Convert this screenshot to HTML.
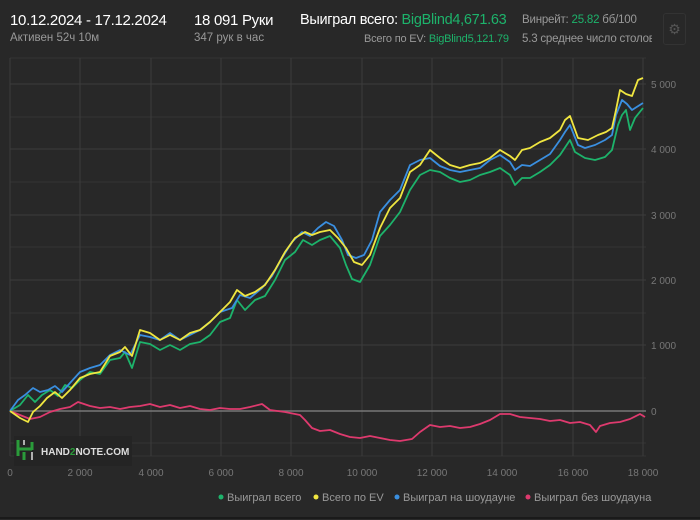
<html><head><style>
body{margin:0;width:700px;height:520px;background:#2a2a2a;font-family:"Liberation Sans",sans-serif;overflow:hidden;position:relative}
.t{position:absolute;white-space:nowrap}
</style></head><body>
<div style="position:absolute;left:0;top:0;width:700px;height:517px;background:#282828;border-bottom:2px solid #1a1a1a"></div>
<div class="t" style="left:10px;top:12px;font-size:15px;color:#fff;letter-spacing:-0.3px">10.12.2024 - 17.12.2024</div>
<div class="t" style="left:10px;top:32px;font-size:11.5px;color:#999">Активен 52ч 10м</div>
<div class="t" style="left:194px;top:12px;font-size:15px;color:#fff;letter-spacing:-0.3px">18 091 Руки</div>
<div class="t" style="left:194px;top:32px;font-size:11.5px;color:#999">347 рук в час</div>
<div class="t" style="left:300px;top:12px;font-size:14.5px;color:#fff;letter-spacing:-0.3px">Выиграл всего: <span style="color:#1db36b">BigBlind4,671.63</span></div>
<div class="t" style="left:364px;top:33px;font-size:11px;color:#999;letter-spacing:-0.2px">Всего по EV: <span style="color:#1db36b">BigBlind5,121.79</span></div>
<div class="t" style="left:522px;top:14px;font-size:11.5px;color:#999;letter-spacing:-0.2px">Винрейт: <span style="color:#1db36b">25.82</span> бб/100</div>
<div class="t" style="left:522px;top:33px;font-size:11.5px;color:#999;width:130px;overflow:hidden;letter-spacing:-0.2px">5.3 среднее число столов</div>
<div style="position:absolute;left:663px;top:13px;width:21px;height:30px;border:1px solid #333;border-radius:3px;color:#555;font-size:14px;text-align:center;line-height:30px">⚙</div>
<svg width="700" height="520" style="position:absolute;left:0;top:0">
<g stroke="#333" stroke-width="1">
<line x1="10" y1="58" x2="646" y2="58"/>
<line x1="10" y1="117" x2="646" y2="117"/><line x1="10" y1="182" x2="646" y2="182"/><line x1="10" y1="247" x2="646" y2="247"/><line x1="10" y1="313" x2="646" y2="313"/><line x1="10" y1="378" x2="646" y2="378"/><line x1="10" y1="443" x2="646" y2="443"/>
<line x1="10" y1="456" x2="646" y2="456"/>
</g>
<g stroke="#3c3c3c" stroke-width="1">
<line x1="10" y1="84" x2="646" y2="84"/><line x1="10" y1="149" x2="646" y2="149"/><line x1="10" y1="215" x2="646" y2="215"/><line x1="10" y1="280" x2="646" y2="280"/><line x1="10" y1="345" x2="646" y2="345"/>
<line x1="10" y1="58" x2="10" y2="456"/><line x1="80" y1="58" x2="80" y2="456"/><line x1="151" y1="58" x2="151" y2="456"/><line x1="221" y1="58" x2="221" y2="456"/><line x1="291" y1="58" x2="291" y2="456"/><line x1="362" y1="58" x2="362" y2="456"/><line x1="432" y1="58" x2="432" y2="456"/><line x1="502" y1="58" x2="502" y2="456"/><line x1="573" y1="58" x2="573" y2="456"/><line x1="643" y1="58" x2="643" y2="456"/>
</g>
<line x1="10" y1="411" x2="646" y2="411" stroke="#777" stroke-width="1.5"/>
<g font-size="10" fill="#777">
<text x="651" y="88">5 000</text><text x="651" y="153">4 000</text><text x="651" y="219">3 000</text><text x="651" y="284">2 000</text><text x="651" y="349">1 000</text><text x="651" y="415">0</text>
<g text-anchor="middle"><text x="10" y="476">0</text><text x="80" y="476">2 000</text><text x="151" y="476">4 000</text><text x="221" y="476">6 000</text><text x="291" y="476">8 000</text><text x="362" y="476">10 000</text><text x="432" y="476">12 000</text><text x="502" y="476">14 000</text><text x="573" y="476">16 000</text><text x="643" y="476">18 000</text></g>
</g>
<g fill="none" stroke-width="1.8" stroke-linejoin="round">
<polyline stroke="#de3a6e" points="10,411 20,415 30,419 40,417 50,412 60,409 70,407 78,402 90,406 100,408 110,407 120,409 130,407 140,406 150,404 160,407 170,405 180,408 190,406 200,409 210,410 220,408 230,409 240,409 250,407 262,404 270,410 285,412 300,415 305,420 312,428 320,431 330,430 340,434 350,437 360,438 370,436 380,438 390,440 400,441 412,439 420,432 430,425 440,427 450,426 460,428 470,427 480,424 490,420 500,414 510,414 520,417 530,418 540,419 550,421 560,420 570,423 580,422 590,425 596,432 600,426 610,423 620,422 630,419 640,414 645,417"/>
<polyline stroke="#1db36b" points="10,411 20,405 28,395 35,402 42,395 50,390 58,396 65,385 72,388 80,380 90,372 100,374 110,360 120,358 125,352 132,368 140,342 150,344 160,350 170,345 180,350 190,344 200,342 210,335 220,322 230,318 237,300 245,310 255,300 265,296 275,280 285,260 295,252 303,240 312,245 320,240 330,236 340,248 346,265 352,279 360,282 370,265 380,236 390,225 400,212 410,190 420,175 430,170 440,172 450,178 460,182 470,180 480,175 490,172 500,168 510,175 515,185 522,178 530,178 540,172 550,165 560,155 570,140 575,152 585,158 595,160 605,157 612,150 618,125 622,115 626,110 630,130 635,118 643,108"/>
<polyline stroke="#3a8fe0" points="10,411 18,400 25,395 33,388 40,392 48,390 55,386 62,392 70,383 80,372 90,368 100,365 110,355 120,350 130,355 140,335 150,337 160,340 170,333 180,340 190,335 200,330 210,322 220,312 232,308 240,295 250,298 262,288 272,276 282,258 292,242 302,232 310,236 318,228 326,222 334,226 342,240 348,255 356,258 364,255 372,240 380,212 390,200 400,190 410,165 420,160 430,158 440,166 450,170 460,172 470,170 480,168 490,160 500,155 510,162 515,170 522,165 530,166 540,160 550,154 560,140 565,132 570,125 578,145 585,148 595,145 605,140 612,135 616,115 622,100 627,104 632,110 643,103"/>
<polyline stroke="#f0e640" points="10,411 20,418 28,422 33,412 40,406 47,398 55,392 62,398 70,390 80,378 90,374 100,372 110,356 120,352 125,347 132,356 140,330 150,333 160,340 170,335 180,340 190,333 200,330 210,322 220,312 230,302 237,290 245,296 255,292 265,285 275,270 285,252 295,238 305,232 312,235 320,232 330,230 338,238 346,248 354,262 362,265 370,255 380,228 390,208 400,198 410,172 420,165 430,150 440,158 450,165 460,168 470,165 480,163 490,158 500,150 510,156 515,160 522,150 530,148 540,142 550,138 560,130 565,120 570,116 578,138 588,140 598,135 606,132 612,128 616,110 620,90 626,94 632,96 638,80 643,78"/>
</g>
<rect x="14" y="436" width="118" height="30" fill="#242424" opacity="0.9"/>
<path d="M18 440v16M18 449h14M32 442v8M24 452v8" stroke="#2a9b3a" stroke-width="3" fill="none"/>
<path d="M24 440v5M32 452v8" stroke="#ddd" stroke-width="1.5"/>
<text x="41" y="455" font-size="10" font-weight="bold" fill="#ddd">HAND<tspan fill="#2a9b3a">2</tspan>NOTE.COM</text>
<g font-size="11" fill="#999">
<circle cx="221" cy="497" r="2.5" fill="#1db36b"/><text x="227" y="501">Выиграл всего</text>
<circle cx="316" cy="497" r="2.5" fill="#f0e640"/><text x="322" y="501">Всего по EV</text>
<circle cx="397" cy="497" r="2.5" fill="#3a8fe0"/><text x="403" y="501">Выиграл на шоудауне</text>
<circle cx="528" cy="497" r="2.5" fill="#de3a6e"/><text x="534" y="501">Выиграл без шоудауна</text>
</g>
</svg>
</body></html>
